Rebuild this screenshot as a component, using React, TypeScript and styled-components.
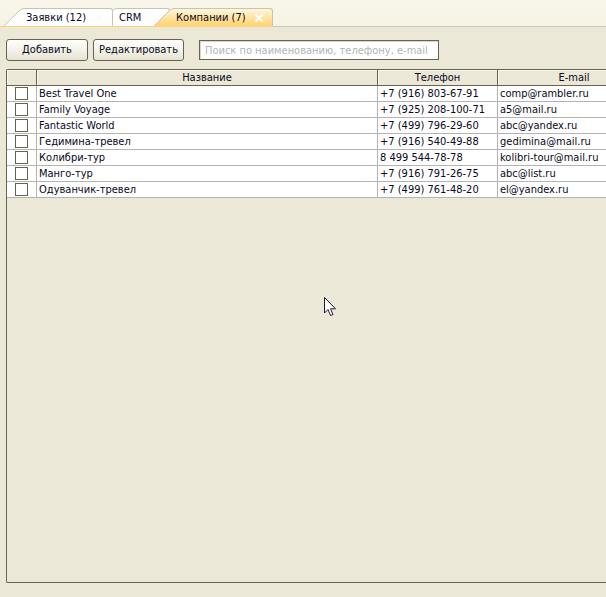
import React from "react";
import styled, { createGlobalStyle } from "styled-components";

const Global = createGlobalStyle`
  * { box-sizing: border-box; }
  html, body { margin: 0; height: 100%; }
  body { background: #ebe8d7; overflow: hidden; }
  body, button, input, table {
    font-family: Tahoma, "DejaVu Sans Condensed", "Noto Sans", sans-serif;
    font-size: 11px;
    line-height: 14px;
    color: #080820;
  }
`;

const Page = styled.div`
  display: flex;
  flex-direction: column;
  height: 100vh;
  overflow: hidden;
`;

const TabBar = styled.nav`
  display: flex;
  align-items: flex-end;
  height: 27px;
  background: linear-gradient(#f9f7eb, #f6f3e4);
`;

const TabList = styled.div`
  display: flex;
  padding-left: 4px;
  border-bottom: 1px solid #ffd27a;
`;

const BarRest = styled.div`
  flex: 1;
  border-bottom: 1px solid #c9c8b8;
`;

const Tab = styled.div<{ $level: number }>`
  display: flex;
  height: 18px;
  position: relative;
  z-index: ${(p) => p.$level};
  & + & { margin-left: -16px; }
`;

const Slant = styled.svg`
  display: block;
  width: 20px;
  height: 18px;
`;

const TabBody = styled.div<{ $active?: boolean }>`
  display: flex;
  align-items: center;
  gap: 8px;
  padding-right: 8px;
  border: 1px solid #c5c5b5;
  border-width: 1px 1px 0 0;
  border-top-right-radius: 3px;
  background: ${(p) => (p.$active ? "linear-gradient(#fff6dc, #ffd36e)" : "#fff")};
`;

const TabButton = styled.button`
  min-width: 26px;
  border: 0;
  padding: 0 0 0 2px;
  background: none;
  text-align: left;
  white-space: nowrap;
`;

const CloseButton = styled.button`
  display: flex;
  border: 0;
  padding: 0;
  background: none;
`;

const Toolbar = styled.div`
  display: flex;
  align-items: center;
  gap: 5px;
  padding: 12px 6px 8px;
`;

const Button = styled.button`
  height: 22px;
  min-width: 82px;
  padding: 0 5px;
  border: 1px solid #66634f;
  border-radius: 3px;
  background: linear-gradient(#fefefc, #f4f2e8 50%, #e6e3d2);
  white-space: nowrap;
`;

const Search = styled.input`
  width: 240px;
  height: 20px;
  margin-left: 10px;
  padding: 0 5px;
  border: 1px solid #66634f;
  border-radius: 0;
  background: #fff;
  box-shadow: inset 1px 1px 0 #d8d6ca;
  &::placeholder { color: #b4b4b4; opacity: 1; }
`;

const Panel = styled.main`
  flex: 1;
  margin: 0 0 14px 6px;
  border: 1px solid #66634f;
  border-right: 0;
  border-radius: 2px 0 0 2px;
  overflow: hidden;
`;

const Table = styled.table`
  width: 644px;
  table-layout: fixed;
  border-collapse: separate;
  border-spacing: 0;
`;

const Col = styled.col<{ $w?: number }>`
  width: ${(p) => (p.$w ? `${p.$w}px` : "auto")};
`;

const Th = styled.th`
  height: 16px;
  padding: 1px 0 0;
  font-weight: normal;
  border: 1px solid #66634f;
  border-width: 0 1px 1px 0;
  box-shadow: inset 1px 1px 0 #fbfaf2;
`;

const Td = styled.td`
  height: 16px;
  padding: 1px 2px 0;
  background: #fff;
  border: 1px solid #b4b4b4;
  border-width: 0 1px 1px 0;
  white-space: nowrap;
`;

const CheckCell = styled(Td)`
  padding: 1px 0 1px 8px;
`;

const Check = styled.input`
  appearance: none;
  display: block;
  width: 13px;
  height: 13px;
  margin: 0;
  border: 1px solid #66634f;
  background: #fff;
`;

const Pointer = styled.svg`
  position: absolute;
  left: 324px;
  top: 297px;
  width: 12px;
  height: 20px;
  pointer-events: none;
`;

const tabs = [
  { title: "Заявки (12)", level: 2 },
  { title: "CRM", level: 1 },
  { title: "Компании (7)", level: 3, active: true },
];

const companies = [
  ["Best Travel One", "+7 (916) 803-67-91", "comp@rambler.ru"],
  ["Family Voyage", "+7 (925) 208-100-71", "a5@mail.ru"],
  ["Fantastic World", "+7 (499) 796-29-60", "abc@yandex.ru"],
  ["Гедимина-тревел", "+7 (916) 540-49-88", "gedimina@mail.ru"],
  ["Колибри-тур", "8 499 544-78-78", "kolibri-tour@mail.ru"],
  ["Манго-тур", "+7 (916) 791-26-75", "abc@list.ru"],
  ["Одуванчик-тревел", "+7 (499) 761-48-20", "el@yandex.ru"],
];

export default function App() {
  return (
    <Page>
      <Global />
      <TabBar>
        <TabList>
          {tabs.map((t) => (
            <Tab key={t.title} $level={t.level}>
              <Slant viewBox="0 0 20 18">
                <defs>
                  <linearGradient id="tabFill" x1="0" y1="0" x2="0" y2="1">
                    <stop offset="0" stopColor="#fff6dc" />
                    <stop offset="1" stopColor="#ffd36e" />
                  </linearGradient>
                </defs>
                <path d="M0 18 L15 3 Q17.5 .5 20 .5 V18Z" fill={t.active ? "url(#tabFill)" : "#fff"} />
                <path d="M0 18 L15 3 Q17.5 .5 20 .5" fill="none" stroke="#c5c5b5" />
              </Slant>
              <TabBody $active={t.active}>
                <TabButton>{t.title}</TabButton>
                <CloseButton aria-label={`Закрыть ${t.title}`}>
                  <svg width="10" height="10" viewBox="0 0 10 10">
                    <path d="M1.5 1.5 L8.5 8.5 M8.5 1.5 L1.5 8.5" stroke={t.active ? "#fff" : "#fbfbf8"} strokeWidth="2" />
                  </svg>
                </CloseButton>
              </TabBody>
            </Tab>
          ))}
        </TabList>
        <BarRest />
      </TabBar>
      <Toolbar>
        <Button>Добавить</Button>
        <Button>Редактировать</Button>
        <Search aria-label="Поиск" placeholder="Поиск по наименованию, телефону, e-mail" />
      </Toolbar>
      <Panel>
        <Table>
          <colgroup>
            <Col $w={30} />
            <Col $w={341} />
            <Col $w={120} />
            <Col />
          </colgroup>
          <thead>
            <tr>
              <Th />
              <Th>Название</Th>
              <Th>Телефон</Th>
              <Th>E-mail</Th>
            </tr>
          </thead>
          <tbody>
            {companies.map(([name, phone, mail]) => (
              <tr key={name}>
                <CheckCell>
                  <Check type="checkbox" aria-label={name} />
                </CheckCell>
                <Td>{name}</Td>
                <Td>{phone}</Td>
                <Td>{mail}</Td>
              </tr>
            ))}
          </tbody>
        </Table>
      </Panel>
      <Pointer viewBox="0 0 12 20">
        <path d="M.5 .5 V16 L4 12.5 L6.5 18.5 L9 17.5 L6.5 11.8 H11.5Z" fill="#fff" stroke="#1c1c30" />
      </Pointer>
    </Page>
  );
}
